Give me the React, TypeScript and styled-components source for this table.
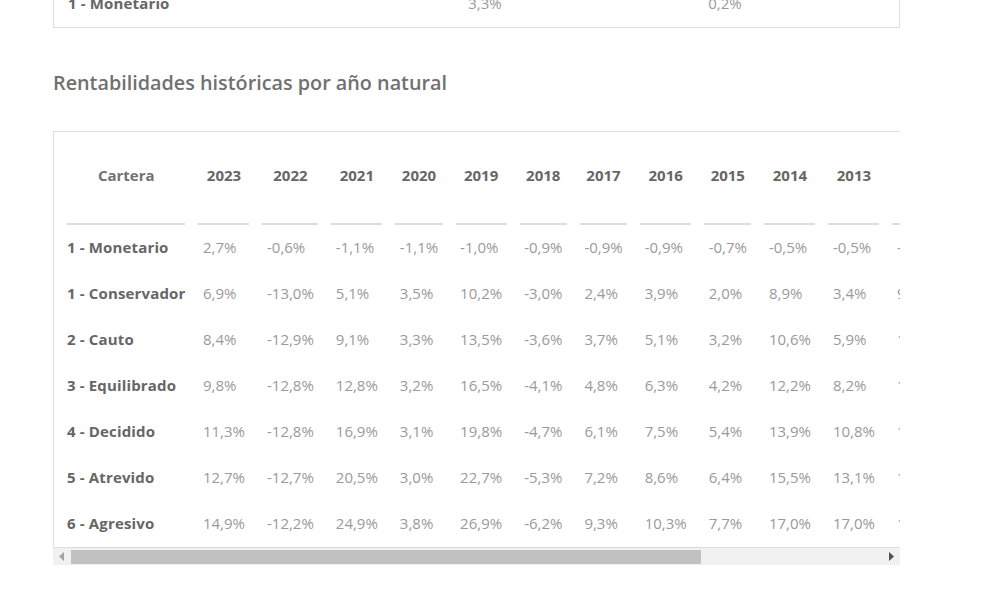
import React from "react";
import styled, { createGlobalStyle } from "styled-components";

const GlobalStyle = createGlobalStyle`
  html, body { margin: 0; padding: 0; background: #ffffff; }
  body { font-family: "Open Sans", "Liberation Sans", sans-serif; color: #666; }
`;

const Page = styled.div`
  width: 847px;
  margin-left: 53px;
  margin-top: -19px;
`;

const SummaryBox = styled.div`
  border: 1px solid #dedede;
  border-top: none;
`;

const SummaryRow = styled.div`
  display: grid;
  grid-template-columns: 311px 240px 240px 1fr;
  align-items: center;
  height: 46px;
  padding-bottom: 2px;
  box-sizing: border-box;
  font-size: 15px;
  line-height: 20px;
`;

const RowLabel = styled.div`
  padding-left: 14px;
  font-weight: 700;
  color: #666;
  letter-spacing: 0.15px;
`;

const CenterValue = styled.div`
  text-align: center;
  color: #9a9a9a;
`;

const Title = styled.h2`
  margin: 42px 0 35px;
  font-size: 19.8px;
  line-height: 26px;
  font-weight: 600;
  color: #707070;
`;

const ScrollArea = styled.div`
  width: 847px;
  overflow: hidden;
`;

const Table = styled.table`
  border: 1px solid #dedede;
  border-collapse: separate;
  border-spacing: 13px 0;
  font-size: 15px;
  line-height: 20px;
`;

const HeadCell = styled.th<{ $first?: boolean }>`
  padding: 33px ${(p) => (p.$first ? "0" : "4.5px")} 38px;
  border-bottom: 2px solid #dcdcdc;
  font-weight: 700;
  color: ${(p) => (p.$first ? "#717171" : "#666")};
  text-align: center;
  white-space: nowrap;
`;

const LabelCell = styled.td`
  height: 44px;
  padding: 0 0 2px;
  font-weight: 700;
  color: #666;
  letter-spacing: 0.15px;
  white-space: nowrap;
  vertical-align: middle;
`;

const ValueCell = styled.td`
  height: 44px;
  padding: 0 4.5px 2px;
  color: #9a9a9a;
  white-space: nowrap;
  vertical-align: middle;
`;

const ScrollBar = styled.div`
  display: flex;
  height: 17px;
  background: #f1f1f1;
`;

const ArrowButton = styled.div`
  flex: 0 0 17px;
  display: flex;
  align-items: center;
  padding-left: 6px;
  box-sizing: border-box;
`;

const Track = styled.div`
  flex: 1;
  display: flex;
  align-items: center;
`;

const Thumb = styled.div`
  height: 14px;
  margin-left: 1px;
  background: #c1c1c1;
`;

function Arrow({ dir, color }: { dir: "left" | "right"; color: string }) {
  return (
    <svg width="5" height="9" viewBox="0 0 5 9">
      {dir === "left" ? (
        <polygon points="5,0 0,4.5 5,9" fill={color} />
      ) : (
        <polygon points="0,0 5,4.5 0,9" fill={color} />
      )}
    </svg>
  );
}

const years = [
  "2023", "2022", "2021", "2020", "2019", "2018", "2017", "2016",
  "2015", "2014", "2013", "2012", "2011", "2010", "2009",
];

const rows: [string, string[]][] = [
  ["1 - Monetario", ["2,7%", "-0,6%", "-1,1%", "-1,1%", "-1,0%", "-0,9%", "-0,9%", "-0,9%", "-0,7%", "-0,5%", "-0,5%", "-0,2%", "0,4%", "0,3%", "1,2%"]],
  ["1 - Conservador", ["6,9%", "-13,0%", "5,1%", "3,5%", "10,2%", "-3,0%", "2,4%", "3,9%", "2,0%", "8,9%", "3,4%", "9,1%", "-1,8%", "2,6%", "7,4%"]],
  ["2 - Cauto", ["8,4%", "-12,9%", "9,1%", "3,3%", "13,5%", "-3,6%", "3,7%", "5,1%", "3,2%", "10,6%", "5,9%", "10,4%", "-3,2%", "3,1%", "10,2%"]],
  ["3 - Equilibrado", ["9,8%", "-12,8%", "12,8%", "3,2%", "16,5%", "-4,1%", "4,8%", "6,3%", "4,2%", "12,2%", "8,2%", "11,6%", "-4,7%", "3,9%", "13,0%"]],
  ["4 - Decidido", ["11,3%", "-12,8%", "16,9%", "3,1%", "19,8%", "-4,7%", "6,1%", "7,5%", "5,4%", "13,9%", "10,8%", "12,8%", "-6,1%", "4,6%", "15,8%"]],
  ["5 - Atrevido", ["12,7%", "-12,7%", "20,5%", "3,0%", "22,7%", "-5,3%", "7,2%", "8,6%", "6,4%", "15,5%", "13,1%", "13,9%", "-7,5%", "5,3%", "18,5%"]],
  ["6 - Agresivo", ["14,9%", "-12,2%", "24,9%", "3,8%", "26,9%", "-6,2%", "9,3%", "10,3%", "7,7%", "17,0%", "17,0%", "15,2%", "-9,0%", "6,1%", "21,4%"]],
];

export default function App() {
  return (
    <>
      <GlobalStyle />
      <Page>
        <SummaryBox>
          <SummaryRow>
            <RowLabel>1 - Monetario</RowLabel>
            <CenterValue>3,3%</CenterValue>
            <CenterValue>0,2%</CenterValue>
            <div />
          </SummaryRow>
        </SummaryBox>
        <Title>Rentabilidades históricas por año natural</Title>
        <ScrollArea>
          <Table>
            <thead>
              <tr>
                <HeadCell $first>Cartera</HeadCell>
                {years.map((y) => (
                  <HeadCell key={y}>{y}</HeadCell>
                ))}
              </tr>
            </thead>
            <tbody>
              {rows.map(([label, vals]) => (
                <tr key={label}>
                  <LabelCell>{label}</LabelCell>
                  {vals.map((v, i) => (
                    <ValueCell key={i}>{v}</ValueCell>
                  ))}
                </tr>
              ))}
            </tbody>
          </Table>
        </ScrollArea>
        <ScrollBar>
          <ArrowButton>
            <Arrow dir="left" color="#a3a3a3" />
          </ArrowButton>
          <Track>
            <Thumb style={{ width: "630px" }} />
          </Track>
          <ArrowButton>
            <Arrow dir="right" color="#505050" />
          </ArrowButton>
        </ScrollBar>
      </Page>
    </>
  );
}
